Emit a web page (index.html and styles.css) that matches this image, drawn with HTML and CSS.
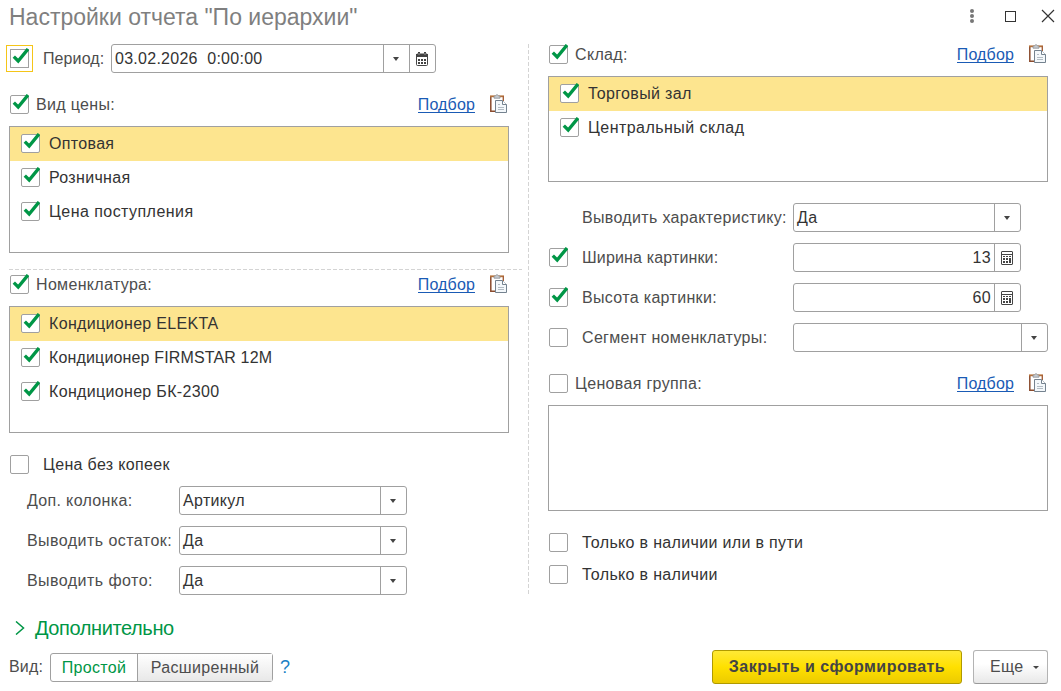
FILE: index.html
```html
<!DOCTYPE html>
<html lang="ru">
<head>
    <meta charset="UTF-8">
    <meta name="viewport" content="width=device-width, initial-scale=1.0">
    <title>Настройки отчета</title>
    <link rel="stylesheet" href="styles.css">
</head>
<body>
    <svg class="sprite">
        <symbol id="tick" viewBox="0 0 19 20">
            <path d="M3.8 8.6 L8.2 13 L18 1" fill="none" stroke="#009646" stroke-width="3.3"/>
        </symbol>
        <symbol id="paste" viewBox="0 0 18 20">
            <path d="M0.8 2 V17.2 H6" fill="none" stroke="#8a4b2d" stroke-width="1.5"/>
            <path d="M0 2.3 H14" stroke="#b5713a" stroke-width="1.8"/>
            <path d="M13.3 2 V8" stroke="#a5603a" stroke-width="1.4"/>
            <path d="M4 4.2 V2.2 L5.5 1.8 Q7 -0.6 8.5 1.8 L10 2.2 V4.2 Z" fill="#c9ccd0" stroke="#8c9096" stroke-width="0.8"/>
            <path d="M5.5 6.5 H12.5 L16.5 10.5 V18.5 H5.5 Z" fill="#f4f8fb" stroke="#74828f"/>
            <path d="M12.5 6.5 V10.5 H16.5" fill="#fff" stroke="#74828f"/>
            <path d="M8 10.5 H10 M8 13.5 H14 M8 15.5 H14" stroke="#b3bcc4"/>
        </symbol>
        <symbol id="calendar" viewBox="0 0 12 14">
            <rect x="0.5" y="2" width="11" height="11.5" rx="1" fill="#fff" stroke="#444"/>
            <path d="M0 2 H12 V5 H0 Z M2 0 H4 V3 H2 Z M8 0 H10 V3 H8 Z" fill="#444"/>
            <path d="M3 1 V3 M9 1 V3" stroke="#999"/>
            <path d="M2 7 h2 v2 h-2z M5 7 h2 v2 h-2z M8 7 h2 v2 h-2z M2 10 h2 v2 h-2z M5 10 h2 v2 h-2z M8 10 h2 v2 h-2z" fill="#444"/>
        </symbol>
        <symbol id="calc" viewBox="0 0 12 14">
            <rect x="0.5" y="0.5" width="11" height="13" rx="0.5" fill="#fff" stroke="#444"/>
            <path d="M1 3.5 H11" stroke="#444"/>
            <path d="M2 5h2v1h-2z M5 5h2v1h-2z M8 5h2v1h-2z M2 7h2v2h-2z M5 7h2v2h-2z M8 7h2v5h-2z M2 10h2v2h-2z M5 10h2v2h-2z" fill="#444"/>
        </symbol>
    </svg>

    <header class="titlebar">
        <h1>Настройки отчета "По иерархии"</h1>
        <svg class="window-buttons" width="88" height="16" viewBox="0 0 88 16">
            <g fill="#777">
                <circle cx="4" cy="3" r="2"/>
                <circle cx="4" cy="8" r="2"/>
                <circle cx="4" cy="13" r="2"/>
            </g>
            <rect x="37.5" y="3.5" width="10" height="10" fill="none" stroke="#333"/>
            <path d="M74 2 L86 14 M86 2 L74 14" stroke="#333" stroke-width="1.2"/>
        </svg>
    </header>

    <main>
        <div class="column left">
            <div class="row period">
                <span class="check focused"><svg><use href="#tick"/></svg></span>
                <span class="label">Период:</span>
                <div class="field">
                    <span class="value">03.02.2026&nbsp; 0:00:00</span>
                    <span class="btn arrow"></span>
                    <span class="btn"><svg width="12" height="14"><use href="#calendar"/></svg></span>
                </div>
            </div>

            <section class="price">
                <div class="section-head">
                    <span class="check"><svg><use href="#tick"/></svg></span>
                    <span class="label">Вид цены:</span>
                    <a class="pick">Подбор</a>
                    <svg class="paste"><use href="#paste"/></svg>
                </div>
                <ul class="list tall">
                    <li class="selected"><span class="check"><svg><use href="#tick"/></svg></span>Оптовая</li>
                    <li><span class="check"><svg><use href="#tick"/></svg></span>Розничная</li>
                    <li class="loose"><span class="check"><svg><use href="#tick"/></svg></span>Цена поступления</li>
                </ul>
            </section>

            <div class="separator"></div>

            <section>
                <div class="section-head">
                    <span class="check"><svg><use href="#tick"/></svg></span>
                    <span class="label">Номенклатура:</span>
                    <a class="pick">Подбор</a>
                    <svg class="paste"><use href="#paste"/></svg>
                </div>
                <ul class="list tall">
                    <li class="selected"><span class="check"><svg><use href="#tick"/></svg></span>Кондиционер ELEKTA</li>
                    <li class="tight"><span class="check"><svg><use href="#tick"/></svg></span>Кондиционер FIRMSTAR 12M</li>
                    <li><span class="check"><svg><use href="#tick"/></svg></span>Кондиционер БК-2300</li>
                </ul>
            </section>

            <div class="flag kopeck">
                <span class="check"></span>
                <span>Цена без копеек</span>
            </div>

            <div class="options">
                <span class="label">Доп. колонка:</span>
                <div class="field"><span class="value">Артикул</span><span class="btn arrow"></span></div>
                <span class="label loose">Выводить остаток:</span>
                <div class="field"><span class="value">Да</span><span class="btn arrow"></span></div>
                <span class="label loose">Выводить фото:</span>
                <div class="field"><span class="value">Да</span><span class="btn arrow"></span></div>
            </div>
        </div>

        <div class="column right">
            <section>
                <div class="section-head">
                    <span class="check"><svg><use href="#tick"/></svg></span>
                    <span class="label">Склад:</span>
                    <a class="pick">Подбор</a>
                    <svg class="paste"><use href="#paste"/></svg>
                </div>
                <ul class="list">
                    <li class="selected"><span class="check"><svg><use href="#tick"/></svg></span>Торговый зал</li>
                    <li class="loose"><span class="check"><svg><use href="#tick"/></svg></span>Центральный склад</li>
                </ul>
            </section>

            <div class="params">
                <span></span>
                <span class="label">Выводить характеристику:</span>
                <div class="field"><span class="value">Да</span><span class="btn arrow"></span></div>
                <span class="check"><svg><use href="#tick"/></svg></span>
                <span class="label tight">Ширина картинки:</span>
                <div class="field"><span class="value number">13</span><span class="btn"><svg width="12" height="14"><use href="#calc"/></svg></span></div>
                <span class="check"><svg><use href="#tick"/></svg></span>
                <span class="label">Высота картинки:</span>
                <div class="field"><span class="value number">60</span><span class="btn"><svg width="12" height="14"><use href="#calc"/></svg></span></div>
                <span class="check"></span>
                <span class="label">Сегмент номенклатуры:</span>
                <div class="field wide"><span class="value"></span><span class="btn arrow"></span></div>
            </div>

            <section>
                <div class="section-head">
                    <span class="check"></span>
                    <span class="label">Ценовая группа:</span>
                    <a class="pick">Подбор</a>
                    <svg class="paste"><use href="#paste"/></svg>
                </div>
                <ul class="list"></ul>
            </section>

            <div class="flags">
                <div class="flag"><span class="check"></span><span>Только в наличии или в пути</span></div>
                <div class="flag"><span class="check"></span><span>Только в наличии</span></div>
            </div>
        </div>
    </main>

    <div class="more">
        <svg width="10" height="14" viewBox="0 0 10 14"><path d="M1 0.5 L8.5 7 L1 13.5" fill="none" stroke="#009646" stroke-width="1.5"/></svg>
        <span>Дополнительно</span>
    </div>

    <footer>
        <span class="label view">Вид:</span>
        <div class="switch">
            <span class="active">Простой</span>
            <span class="advanced">Расширенный</span>
        </div>
        <span class="help">?</span>
        <button class="primary">Закрыть и сформировать</button>
        <button class="menu">Еще<i></i></button>
    </footer>
</body>
</html>
```
FILE: styles.css
```css
*{
    box-sizing: border-box;
}
body{
    margin: 0;
    width: 1061px;
    height: 691px;
    overflow: hidden;
    background-color: white;
    color: #333;
    font-family: "Liberation Sans", Arial, sans-serif;
    font-size: 16px;
    line-height: 20px;
    letter-spacing: 0.33px;
    white-space: nowrap;
}
.sprite{
    display: none;
}
.titlebar{
    display: flex;
    justify-content: space-between;
    align-items: center;
    height: 34px;
    padding: 0 5px 2px 9px;
}
h1{
    margin: 2px 0 0;
    font-size: 23px;
    font-weight: normal;
    letter-spacing: 0;
    color: #7f7f7f;
}
main{
    display: flex;
    height: 551px;
    margin-top: 10px;
}
.column{
    display: flex;
    flex-direction: column;
}
.left{
    width: 529px;
    padding-left: 9px;
    /* dashed vertical line between the columns */
    background: repeating-linear-gradient(#d4d4d4 0 4px, transparent 4px 6px) right top / 1px 100% no-repeat;
}
.right{
    width: 519px;
    padding-top: 1px;
    padding-left: 19px;
}
.label{
    color: #4d4d4d;
}
.loose{
    letter-spacing: 0.45px;
}
.tight{
    letter-spacing: 0.15px;
}

/* checkboxes */
.check{
    flex: none;
    width: 19px;
    height: 19px;
    border: 1px solid #a0a0a0;
    border-radius: 2px;
    background-color: white;
}
.check svg{
    display: block;
    width: 19px;
    height: 20px;
    margin: -2px -1px;
    overflow: visible;
}
.focused{
    border-radius: 0;
    outline: 1px solid #f5c518;
    outline-offset: 3px;
}

/* input fields */
.field{
    display: flex;
    height: 29px;
    width: 228px;
    border: 1px solid #a0a0a0;
    border-radius: 3px;
}
.value{
    flex: 1;
    padding: 4px 3px;
}
.number{
    text-align: right;
}
.btn{
    display: flex;
    justify-content: center;
    align-items: center;
    width: 26px;
    padding-right: 1px;
    border-left: 1px solid #a0a0a0;
}
.arrow::after{
    content: "";
    border: 3px solid transparent;
    border-top: 4px solid #444;
    border-bottom: 0;
}
.period{
    display: flex;
    align-items: center;
    padding-left: 1px;
}
.period .label{
    width: 68px;
    margin-left: 14px;
    letter-spacing: 0.1px;
}
.period .field{
    width: 325px;
}
.period .value{
    letter-spacing: 0.27px;
}

/* list sections */
.section-head{
    display: flex;
    align-items: flex-start;
    width: 500px;
    height: 19px;
    margin-bottom: 12px;
    padding-left: 1px;
}
.section-head .label{
    flex: 1;
    margin-left: 7px;
}
.pick{
    height: 18px;
    border-bottom: 1px solid #1a5bb5;
    color: #1a5bb5;
    letter-spacing: 0.15px;
}
.paste{
    width: 18px;
    height: 20px;
    margin: -1px 1px 0 15px;
}
.list{
    width: 500px;
    height: 106px;
    margin: 0;
    padding: 0;
    border: 1px solid #a0a0a0;
    list-style: none;
}
.tall{
    height: 127px;
}
.list li{
    display: flex;
    align-items: center;
    height: 34px;
    padding-left: 11px;
    padding-bottom: 1px;
    gap: 9px;
}
.selected{
    background-color: #fde58f;
}
.price{
    margin-top: 22px;
}
.separator{
    flex: none;
    width: 513px;
    height: 1px;
    margin: 16px 0 5px;
    background: repeating-linear-gradient(90deg, #d4d4d4 0 4px, transparent 4px 6px);
}
.flag{
    display: flex;
    align-items: flex-start;
    gap: 14px;
    height: 19px;
    padding-left: 1px;
}
.kopeck{
    margin-top: 22px;
}
.options{
    display: grid;
    grid-template-columns: 152px 228px;
    row-gap: 11px;
    align-items: center;
    margin-top: 12px;
    padding-left: 18px;
}

/* right column */
.params{
    display: grid;
    grid-template-columns: 33px 211px 255px;
    row-gap: 11px;
    align-items: center;
    margin: 21px 0 22px;
    padding-left: 1px;
}
.wide{
    width: 255px;
}
.flags{
    display: flex;
    flex-direction: column;
    gap: 13px;
    margin-top: 22px;
}

/* bottom */
.more{
    display: flex;
    align-items: center;
    gap: 10px;
    height: 24px;
    margin-top: 21px;
    padding-left: 15px;
    font-size: 20px;
    letter-spacing: -0.4px;
    color: #009646;
}
footer{
    display: flex;
    align-items: center;
    height: 34px;
    margin-top: 10px;
    padding: 0 13px 0 9px;
}
.view{
    width: 41px;
    letter-spacing: 0.2px;
}
.switch{
    display: flex;
    width: 223px;
    height: 29px;
    border: 1px solid #a0a0a0;
    border-radius: 3px;
    line-height: 27px;
    text-align: center;
}
.active{
    width: 86px;
    color: #009646;
}
.advanced{
    flex: 1;
    border-left: 1px solid #a0a0a0;
    background: linear-gradient(#fff, #e8e8e8);
    color: #4d4d4d;
}
.help{
    flex: 1;
    margin-left: 7px;
    color: #1a7fc4;
    font-size: 18px;
}
button{
    height: 34px;
    padding: 0;
    border: 1px solid #b3b3b3;
    border-bottom-color: #999;
    border-radius: 3px;
    background: linear-gradient(#fff, #fff 40%, #e8e8e8);
    color: #4d4d4d;
    font: inherit;
    letter-spacing: 0.3px;
}
.primary{
    width: 250px;
    margin-right: 11px;
    border-color: #b09a00;
    background: linear-gradient(#ffe936, #ffe000 50%, #eccb00);
    color: #444;
    font-weight: bold;
    letter-spacing: 0.46px;
}
.menu{
    display: flex;
    align-items: center;
    gap: 10px;
    width: 75px;
    padding-left: 16px;
}
.menu i{
    border: 3px solid transparent;
    border-top-color: #444;
    border-bottom: 0;
}
```
